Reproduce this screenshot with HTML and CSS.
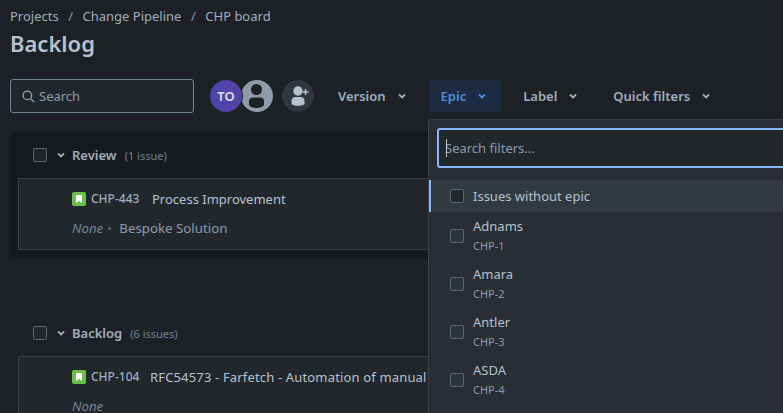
FILE: index.html
```html
<!DOCTYPE html>
<html lang="en">
<head>
<meta charset="utf-8">
<title>Backlog</title>
<link rel="stylesheet" href="styles.css">
</head>
<body>
<div class="page">
  <nav class="crumbs"><span>Projects</span><i>/</i><span>Change Pipeline</span><i>/</i><span>CHP board</span></nav>
  <h1 class="title">Backlog</h1>
  <div class="toolbar">
    <label class="search">
      <svg class="search-icon" viewBox="0 0 16 16"><circle cx="6.8" cy="6.8" r="4.6"/><path d="M10.2 10.2 14 14"/></svg>
      <span>Search</span>
    </label>
    <div class="avatars">
      <span class="avatar to">TO</span>
      <span class="avatar anon">
        <svg viewBox="0 0 32 32"><circle cx="15.500" cy="9.500" r="5.500"/><path d="M8 25v-3.500c0-2.500 1.500-4 4-4h7c2.500 0 4 1.500 4 4V25c-1.500 2-4 3-7.500 3S9.500 27 8 25z"/></svg>
      </span>
    </div>
    <span class="avatar add">
      <svg viewBox="0 0 32 32"><circle cx="16" cy="11" r="4.700"/><path d="M9.500 24v-3c0-2.600 1.700-4 4-4h5c2.300 0 4 1.400 4 4v3c-1 1-3.500 1.800-6.500 1.800s-5.500-.8-6.500-1.800z"/><path d="M23.500 9v6M20.500 12h6" class="plus"/></svg>
    </span>
    <button class="filter version">Version<svg class="chev" viewBox="0 0 10 10"><path d="M2 3.500 5 6.500 8 3.500"/></svg></button>
    <button class="filter active">Epic<svg class="chev" viewBox="0 0 10 10"><path d="M2 3.500 5 6.500 8 3.500"/></svg></button>
    <button class="filter">Label<svg class="chev" viewBox="0 0 10 10"><path d="M2 3.500 5 6.500 8 3.500"/></svg></button>
    <button class="filter">Quick filters<svg class="chev" viewBox="0 0 10 10"><path d="M2 3.500 5 6.500 8 3.500"/></svg></button>
  </div>

  <section class="sprint review">
    <header class="sprint-head">
      <span class="check"></span>
      <svg class="chev head-chev" viewBox="0 0 10 10"><path d="M2 3.500 5 6.500 8 3.500"/></svg>
      <strong>Review</strong><span class="count">(1 issue)</span>
    </header>
    <article class="issue">
      <div class="issue-top">
        <svg class="story" viewBox="0 0 14 14"><rect width="14" height="14" rx="2"/><path d="M4 3h6v8L7 8.800 4 11z"/></svg>
        <span class="key">CHP-443</span><span class="summary">Process Improvement</span>
      </div>
      <div class="issue-meta"><em>None</em><span class="dot"></span><span>Bespoke Solution</span></div>
    </article>
  </section>

  <section class="sprint backlog">
    <header class="sprint-head">
      <span class="check"></span>
      <svg class="chev head-chev" viewBox="0 0 10 10"><path d="M2 3.500 5 6.500 8 3.500"/></svg>
      <strong>Backlog</strong><span class="count">(6 issues)</span>
    </header>
    <article class="issue">
      <div class="issue-top">
        <svg class="story" viewBox="0 0 14 14"><rect width="14" height="14" rx="2"/><path d="M4 3h6v8L7 8.800 4 11z"/></svg>
        <span class="key">CHP-104</span><span class="summary">RFC54573 - Farfetch - Automation of manual</span>
      </div>
      <div class="issue-meta"><em>None</em></div>
    </article>
  </section>

  <div class="popup">
    <div class="popup-search"><span class="caret"></span><span>Search filters...</span></div>
    <ul class="options">
      <li class="option hot"><span class="check"></span><span class="opt-name">Issues without epic</span></li>
      <li class="option"><span class="check"></span><div class="opt-text"><div class="opt-name">Adnams</div><div class="opt-key">CHP-1</div></div></li>
      <li class="option"><span class="check"></span><div class="opt-text"><div class="opt-name">Amara</div><div class="opt-key">CHP-2</div></div></li>
      <li class="option"><span class="check"></span><div class="opt-text"><div class="opt-name">Antler</div><div class="opt-key">CHP-3</div></div></li>
      <li class="option"><span class="check"></span><div class="opt-text"><div class="opt-name">ASDA</div><div class="opt-key">CHP-4</div></div></li>
    </ul>
  </div>
</div>
</body>
</html>
```
FILE: styles.css
```css
* { box-sizing: border-box; }
html, body { margin: 0; height: 100%; }
body {
  background: #1d2125;
  color: #b6c2cf;
  font-family: "Noto Sans", "Open Sans", sans-serif;
  overflow: hidden;
}
.page { position: relative; width: 783px; height: 413px; overflow: hidden; padding: 8px 0 0 10px; }
.crumbs { display: flex; gap: 9.500px; height: 17px; font-size: 13px; line-height: 17px; color: #9fadbc; }
.crumbs i { font-style: normal; color: #8c9bab; }
.title { margin: 4px 0 0; font-size: 22px; line-height: 28px; font-weight: 600; color: #b6c2cf; }
.toolbar { display: flex; align-items: center; margin-top: 22px; height: 34px; }
.search {
  display: flex; align-items: center; gap: 3px;
  width: 184px; height: 34px; padding-left: 10px;
  border: 1px solid #738496; border-radius: 3px;
  background: #22272b; color: #8c9bab; font-size: 13px;
}
.search-icon { width: 15px; height: 15px; fill: none; stroke: #9fadbc; stroke-width: 1.300; }
.avatars { display: flex; margin-left: 16px; }
.avatar {
  display: flex; align-items: center; justify-content: center;
  width: 32px; height: 32px; border-radius: 50%; flex: none;
}
.avatar svg { width: 32px; height: 32px; display: block; }
.to { background: #5243aa; color: #dfe1e6; font-size: 13px; font-weight: 600; position: relative; z-index: 1; box-shadow: 0 0 0 1px #1d2125; }
.anon { background: #8f9ba8; margin-left: -1px; overflow: hidden; }
.anon svg { fill: #1d2125; }
.add { background: #2f363c; margin-left: 9px; }
.add svg { fill: #b6c2cf; }
.add .plus { fill: none; stroke: #b6c2cf; stroke-width: 1.500; }
.filter {
  display: flex; align-items: center; gap: 11px;
  height: 32px; padding: 0 14px 0 12px; margin-left: 9px;
  background: none; border: 0; border-radius: 3px;
  font: 600 13px "Noto Sans", "Open Sans", sans-serif; color: #9fadbc;
}
.filter.version { margin-left: 12px; }
.filter.active { background: #1c2b41; color: #4f8fdf; margin-left: 8px; }
.filter.active + .filter { margin-left: 10px; }
.chev { width: 10px; height: 10px; fill: none; stroke: currentColor; stroke-width: 1.800; }
.sprint { width: 440px; }
.review { margin-top: 19px; height: 126px; padding-left: 8px; background: #161a1d; border-radius: 3px; }
.backlog { margin-top: 52px; padding-left: 8px; }
.sprint-head { display: flex; align-items: center; height: 46px; padding-left: 15px; font-size: 12px; }
.sprint-head strong { font-size: 13px; font-weight: 600; color: #9fadbc; }
.head-chev { margin: 0 6px 0 9px; color: #9fadbc; }
.count { margin-left: 8px; font-size: 11px; color: #738496; }
.check { display: block; flex: none; width: 14px; height: 14px; border: 1.500px solid #596773; border-radius: 2px; background: #22272b; }
.issue { width: 440px; height: 72px; background: #22272b; border: 1px solid #38414a; padding: 11px 0 0 53px; }
.issue-top { display: flex; align-items: center; height: 17px; }
.story { width: 14px; height: 14px; flex: none; }
.story rect { fill: #6abf4b; }
.story path { fill: #fff; }
.key { margin-left: 5px; font-size: 12px; font-weight: 500; color: #9fadbc; width: 61px; white-space: nowrap; }
.summary { font-size: 13px; color: #b6c2cf; white-space: nowrap; }
.backlog .key { width: 59px; }
.backlog .summary { letter-spacing: .16px; }
.issue-meta { display: flex; align-items: center; margin-top: 13px; font-size: 13.300px; color: #8c9bab; line-height: 17px; }
.issue-meta em { color: #738496; }
.dot { width: 3px; height: 3px; margin: 0 8px 0 5px; background: #596773; border-radius: 50%; }
.popup {
  position: absolute; left: 428px; top: 119px; width: 400px; height: 320px;
  background: #282e33; border-top: 1px solid #38414a; border-left: 1px solid #38414a;
  border-radius: 3px 0 0 0; padding-top: 8px;
}
.popup-search {
  display: flex; align-items: center; height: 40px; margin-left: 8px; padding-left: 6px;
  border: 2px solid #85b8ff; border-radius: 3px; background: #22272b;
  color: #8c9bab; font-size: 13px; position: relative;
}
.caret { position: absolute; left: 7px; top: 9px; width: 1px; height: 18px; background: #b6c2cf; }
.options { list-style: none; margin: 12px 0 0; padding: 0; }
.option { display: flex; align-items: center; gap: 9px; height: 48px; padding-left: 21px; }
.option .check { background: #2c333a; }
.option.hot { height: 32px; background: #323940; border-left: 2px solid #85b8ff; padding-left: 19px; }
.option.hot .check { background: #22272b; }
.opt-text { padding-bottom: 2px; }
.opt-name { font-size: 13px; line-height: 18px; color: #b6c2cf; }
.opt-key { font-size: 11px; line-height: 14px; margin-top: 4px; color: #8c9bab; }
```
